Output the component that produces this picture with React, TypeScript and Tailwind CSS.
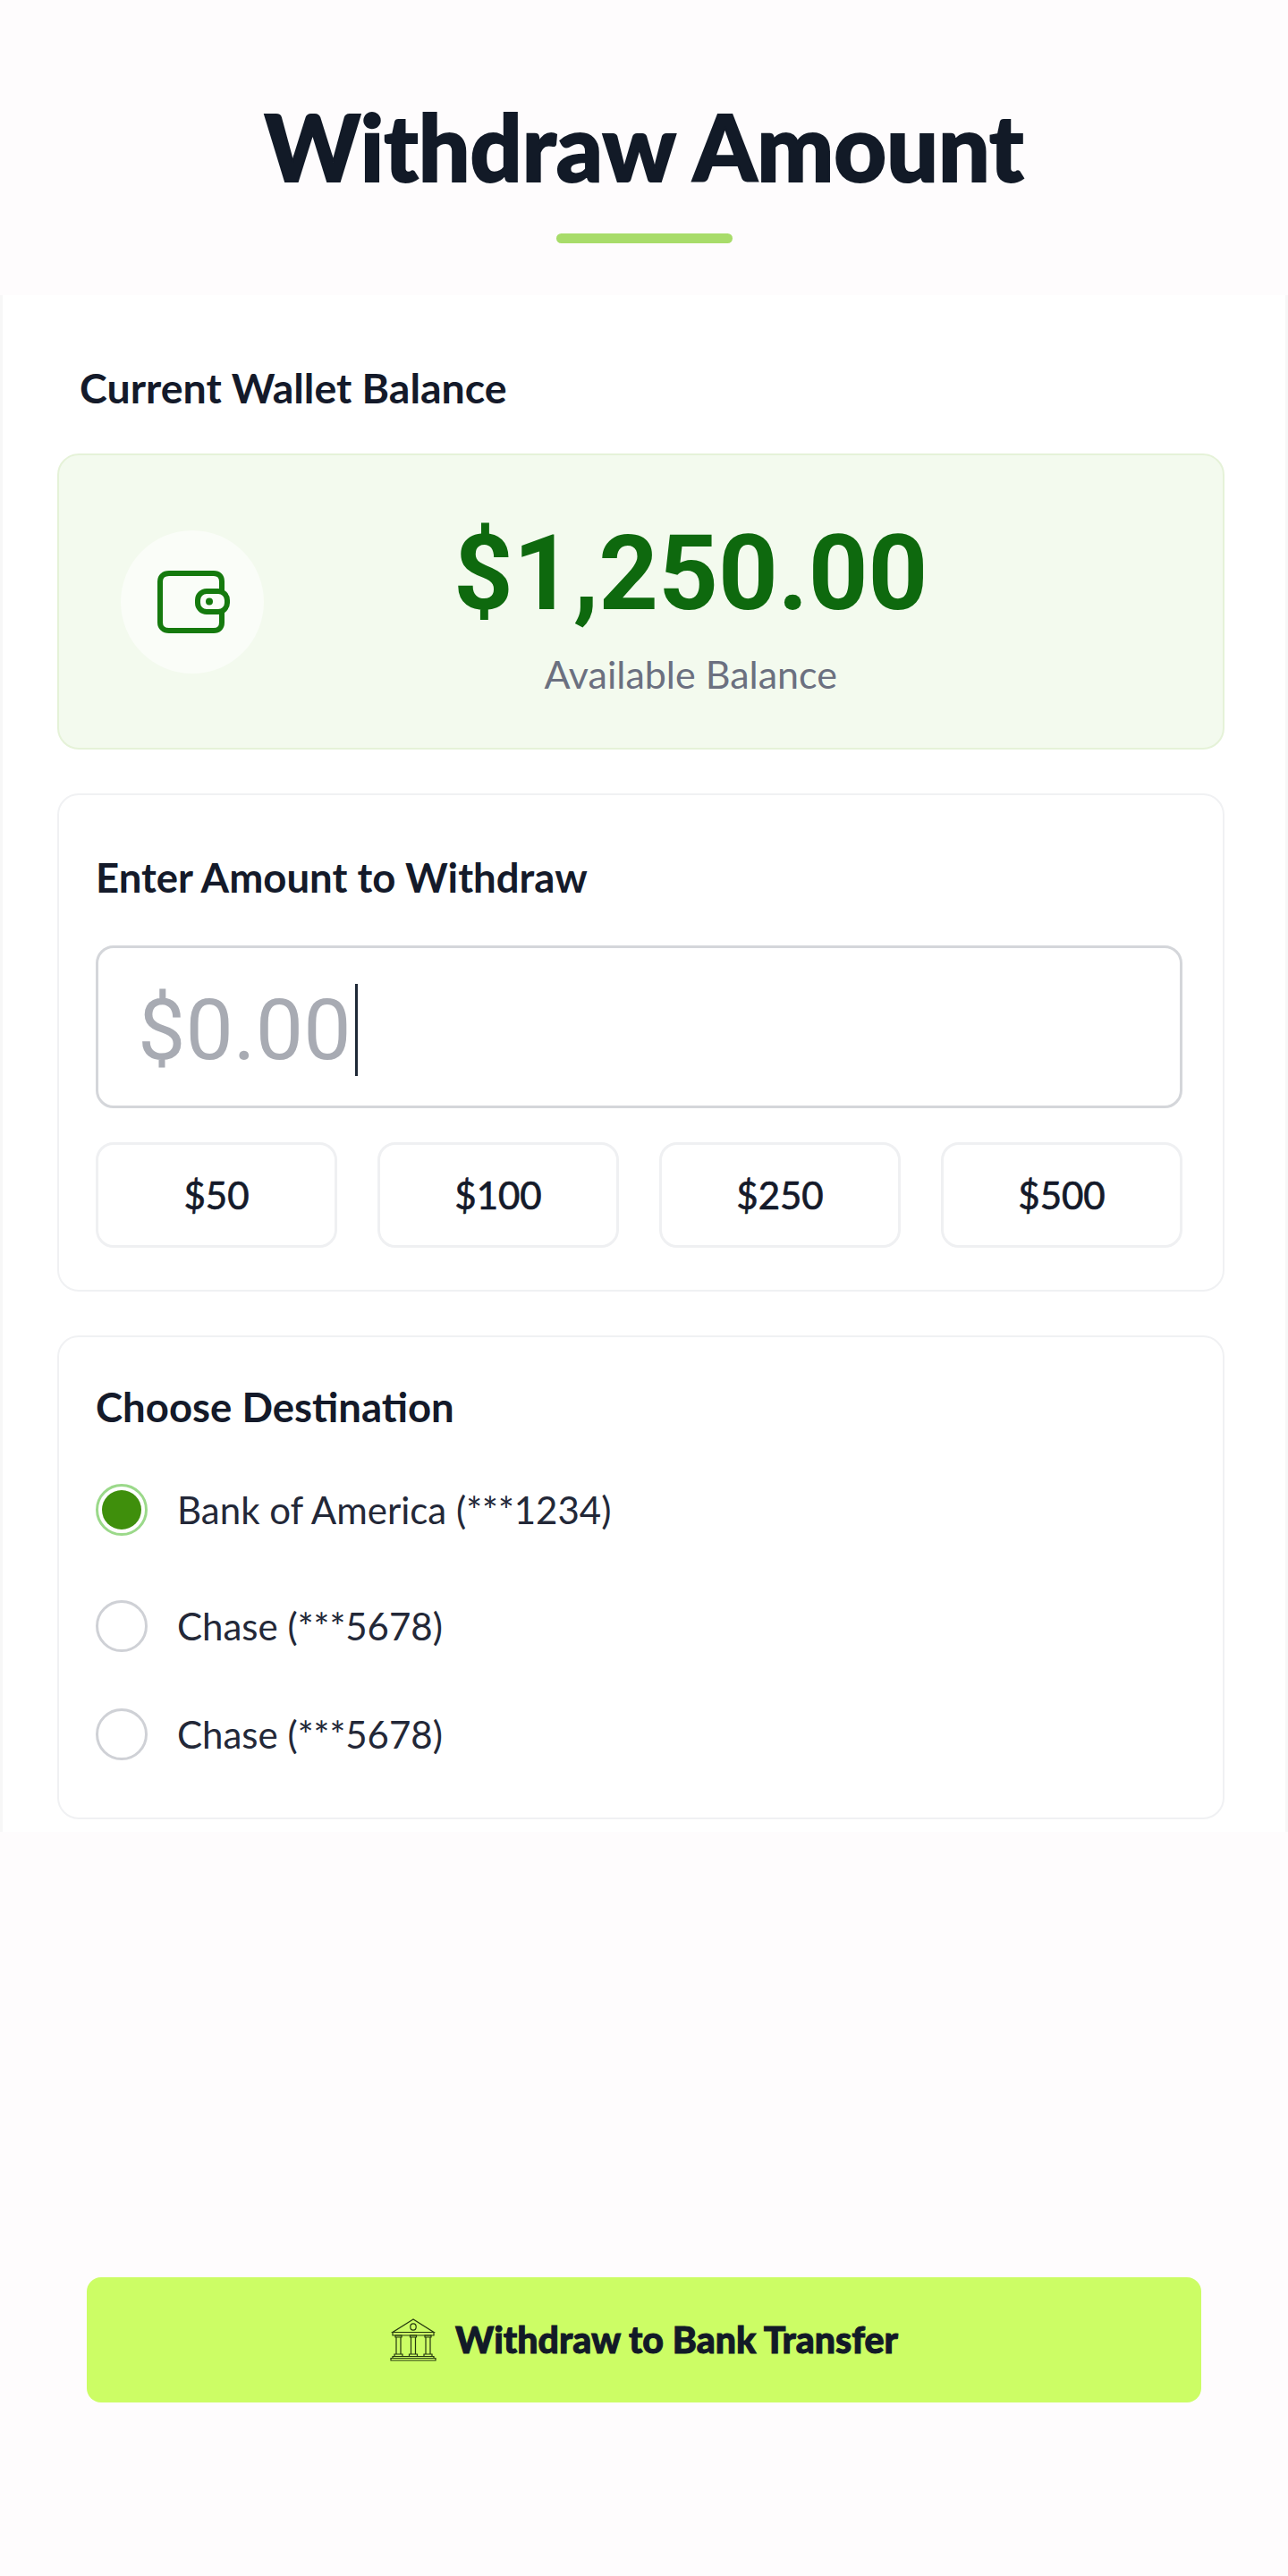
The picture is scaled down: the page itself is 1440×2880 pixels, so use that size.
import React from "react";

const amounts = ["$50", "$100", "$250", "$500"];

function WalletIcon() {
  return (
    <svg width="82" height="70" viewBox="0 0 82 70" fill="none" stroke="#157a0e" strokeWidth="6" className="ml-[3px]">
      <path d="M72 22V12C72 6.5 68.5 3 63 3H13C7 3 3 6.5 3 12V58C3 63.5 7 67 13 67H63C68.5 67 72 63.5 72 58V47" />
      <rect x="45" y="23" width="33" height="23" rx="10" />
      <circle cx="58" cy="34.5" r="4" fill="#157a0e" stroke="none" />
    </svg>
  );
}

function BankIcon() {
  return (
    <svg width="52" height="48" viewBox="0 0 52 48" fill="none" stroke="#24380f" strokeWidth="1.2">
      <path d="M26 1L3 15.5H49L26 1Z" />
      <ellipse cx="26" cy="9.5" rx="3.2" ry="3.6" />
      <path d="M3 15.5V19H49V15.5" />
      <path d="M6 19H13V21H6ZM22.5 19H29.5V21H22.5ZM39 19H46V21H39Z" />
      <path d="M7 21V40M12 21V40M23.5 21V40M28.5 21V40M40 21V40M45 21V40" />
      <path d="M5 40H14V42.5H5ZM21.5 40H30.5V42.5H21.5ZM38 40H47V42.5H38Z" />
      <path d="M3 42.5H49V44.5H3ZM1 44.5H51V47H1Z" />
    </svg>
  );
}

function Radio({ label, selected }: { label: string; selected?: boolean }) {
  return (
    <div className="flex items-center gap-[33px]">
      {selected ? (
        <div className="flex h-[58px] w-[58px] items-center justify-center rounded-full border-[3px] border-[#9bd98a]">
          <div className="h-[44px] w-[44px] rounded-full bg-[#3f8f0c]"></div>
        </div>
      ) : (
        <div className="h-[58px] w-[58px] rounded-full border-[3px] border-[#cfd1d6]"></div>
      )}
      <span className="text-[42px] leading-none text-[#232838]">{label}</span>
    </div>
  );
}

export default function App() {
  return (
    <div className="flex h-[2880px] w-full flex-col bg-[#fefcfd] font-['Lato','Liberation_Sans',sans-serif] text-[#141a2a]">
      <div className="flex h-[330px] flex-col items-center">
        <h1 className="mt-[108px] text-[102px] leading-[112px] font-black text-[#121a27] [-webkit-text-stroke:2px_#121a27]">Withdraw Amount</h1>
        <div className="mt-[41px] h-[11px] w-[197px] rounded-full bg-[#a8dc6a]"></div>
      </div>

      <div className="h-[1718px] border-x-[3px] border-[#f7f7f7] bg-white pr-[68px] pl-[61px]">
        <h2 className="mt-[80px] ml-[25px] text-[46.5px] leading-[46px] font-bold">Current Wallet Balance</h2>

        <div className="mt-[51px] flex h-[331px] items-center rounded-[24px] border-2 border-[#e5f2d8] bg-[#f3faee] pl-[69px]">
          <div className="flex h-[160px] w-[160px] items-center justify-center rounded-full bg-[#fafdf8]">
            <WalletIcon />
          </div>
          <div className="mt-[8px] ml-[212px] flex flex-col items-center">
            <div className="font-['Roboto',sans-serif] text-[116.5px] leading-[130px] font-bold text-[#0e690e]">$1,250.00</div>
            <div className="mt-[25px] text-[43px] leading-[46px] text-[#6b7080]">Available Balance</div>
          </div>
        </div>

        <div className="mt-[49px] flex h-[557px] flex-col rounded-[24px] border-2 border-[#f0f1f3] pr-[45px] pl-[41px]">
          <h2 className="mt-[69px] text-[45.5px] leading-[46px] font-bold">Enter Amount to Withdraw</h2>
          <div className="mt-[53px] flex h-[182px] items-center rounded-[20px] border-[3px] border-[#d4d6da] pt-[6px] pl-[44px]">
            <span className="font-['Roboto',sans-serif] text-[95px] leading-none text-[#a8abb3]">$0.00</span>
            <span className="ml-[4px] h-[103px] w-[3px] bg-[#1f2937]"></span>
          </div>
          <div className="mt-[38px] grid grid-cols-4 gap-[45px]">
            {amounts.map((a) => (
              <div key={a} className="flex h-[118px] items-center justify-center rounded-[20px] border-[3px] border-[#eff0f2] text-[42px] text-[#141a2a] [-webkit-text-stroke:0.7px_#141a2a]">
                {a}
              </div>
            ))}
          </div>
        </div>

        <div className="mt-[49px] flex h-[541px] flex-col rounded-[24px] border-2 border-[#f0f1f3] pr-[45px] pl-[41px]">
          <h2 className="mt-[55px] text-[45.5px] leading-[46px] font-bold">Choose Destination</h2>
          <div className="mt-[63px] flex flex-col">
            <Radio label="Bank of America (***1234)" selected />
            <div className="mt-[72px]">
              <Radio label="Chase (***5678)" />
            </div>
            <div className="mt-[63px]">
              <Radio label="Chase (***5678)" />
            </div>
          </div>
        </div>
      </div>

      <div className="mx-[97px] mt-[498px] flex h-[140px] items-center justify-center gap-[21px] rounded-[16px] bg-[#ccfd65]">
        <BankIcon />
        <span className="text-[41px] font-black text-[#121a27] [-webkit-text-stroke:1px_#121a27]">Withdraw to Bank Transfer</span>
      </div>
    </div>
  );
}
